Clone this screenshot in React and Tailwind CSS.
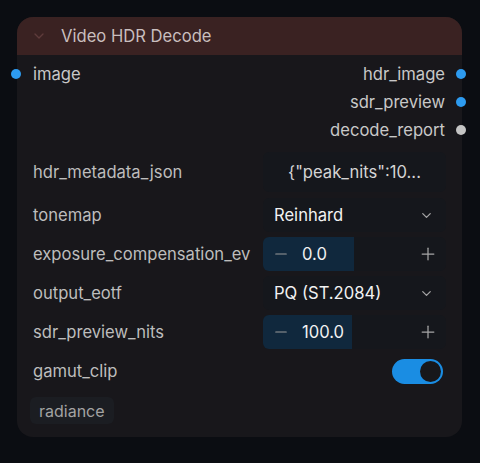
import React from "react";
import { ChevronDown, Minus, Plus } from "lucide-react";

const outputs = [
    { name: "hdr_image", color: "bg-[#2d9bf0]" },
    { name: "sdr_preview", color: "bg-[#2d9bf0]" },
    { name: "decode_report", color: "bg-[#c4c4c4]" },
];

function Select({ value }) {
    return (
        <div className="h-[34px] rounded-md bg-[#15171c] flex items-center justify-between pl-[11px] pr-[12px] text-[#f2f2f2]">
            <span>{value}</span>
            <ChevronDown size={15} className="text-[#a6a6a6]" />
        </div>
    );
}

function Stepper({ value, fill }) {
    return (
        <div className="h-[34px] rounded-md bg-[#15171c] flex items-center relative overflow-hidden">
            <div className="absolute inset-y-0 left-0 bg-[#10283d]" style={{ width: fill }} />
            <Minus size={18} className="relative ml-[9px] text-[#9a9a9a]" strokeWidth={1.5} />
            <span className="relative ml-[12px] text-[#f2f2f2]">{value}</span>
            <Plus size={20} className="relative ml-auto mr-[8px] text-[#a6a6a6]" strokeWidth={1.5} />
        </div>
    );
}

function Row({ label, children }) {
    return (
        <div className="flex items-center h-[34px]">
            <span className="w-[230px] shrink-0 text-[#bdbdbd]">{label}</span>
            <div className="flex-1">{children}</div>
        </div>
    );
}

export default function App() {
    return (
        <div className="w-[480px] h-[463px] bg-[#0b0d12] pt-[17px] pl-[17px] font-['Inter',sans-serif] text-[16.6px]">
            <div className="w-[445px] h-[420px] rounded-[16px] bg-[#18171b] relative">
                {/* Header */}
                <div className="h-[38px] rounded-t-[16px] bg-[#3a2222] flex items-center pl-[14px]">
                    <ChevronDown size={16} className="text-[#5e3b3b]" />
                    <span className="ml-[14px] text-[#c9bebe]">Video HDR Decode</span>
                </div>

                {/* Sockets */}
                <div className="relative pt-[5px]">
                    <div className="absolute left-0 top-[5px] h-[28px] flex items-center">
                        <div className="w-[10px] h-[10px] rounded-full bg-[#2d9bf0] -ml-[6px]" />
                        <span className="ml-[12px] text-[#c8c8c8]">image</span>
                    </div>
                    {outputs.map((o) => (
                        <div key={o.name} className="h-[28px] flex items-center justify-end">
                            <span className="text-[#c8c8c8]">{o.name}</span>
                            <div className={`w-[10px] h-[10px] rounded-full ${o.color} ml-[11px] -mr-[4px]`} />
                        </div>
                    ))}
                </div>

                {/* Widgets */}
                <div className="px-[16px] mt-[8px] flex flex-col gap-[5px]">
                    <div className="flex items-center h-[40px]">
                        <span className="w-[230px] shrink-0 text-[#bdbdbd]">hdr_metadata_json</span>
                        <div className="flex-1 h-[40px] rounded-md bg-[#15171c] flex items-center justify-center text-[#d4d4d4]">
                            {"{\"peak_nits\":10..."}
                        </div>
                    </div>
                    <div className="mt-[1px]">
                        <Row label="tonemap">
                            <Select value="Reinhard" />
                        </Row>
                    </div>
                    <Row label="exposure_compensation_ev">
                        <Stepper value="0.0" fill={91} />
                    </Row>
                    <Row label="output_eotf">
                        <Select value="PQ (ST.2084)" />
                    </Row>
                    <Row label="sdr_preview_nits">
                        <Stepper value="100.0" fill={89} />
                    </Row>
                    <Row label="gamut_clip">
                        <div className="flex justify-end pr-[3px]">
                            <div className="w-[51px] h-[25px] rounded-full bg-[#1a8de3] flex items-center justify-end pr-[2px]">
                                <div className="w-[21px] h-[21px] rounded-full bg-[#17171a]" />
                            </div>
                        </div>
                    </Row>
                    <div className="mt-[4px] -ml-[3px]">
                        <span className="inline-flex items-center h-[27px] px-[9px] rounded-md bg-[#1b1d22] text-[16px] text-[#a3a3a3]">
                            radiance
                        </span>
                    </div>
                </div>
            </div>
        </div>
    );
}
